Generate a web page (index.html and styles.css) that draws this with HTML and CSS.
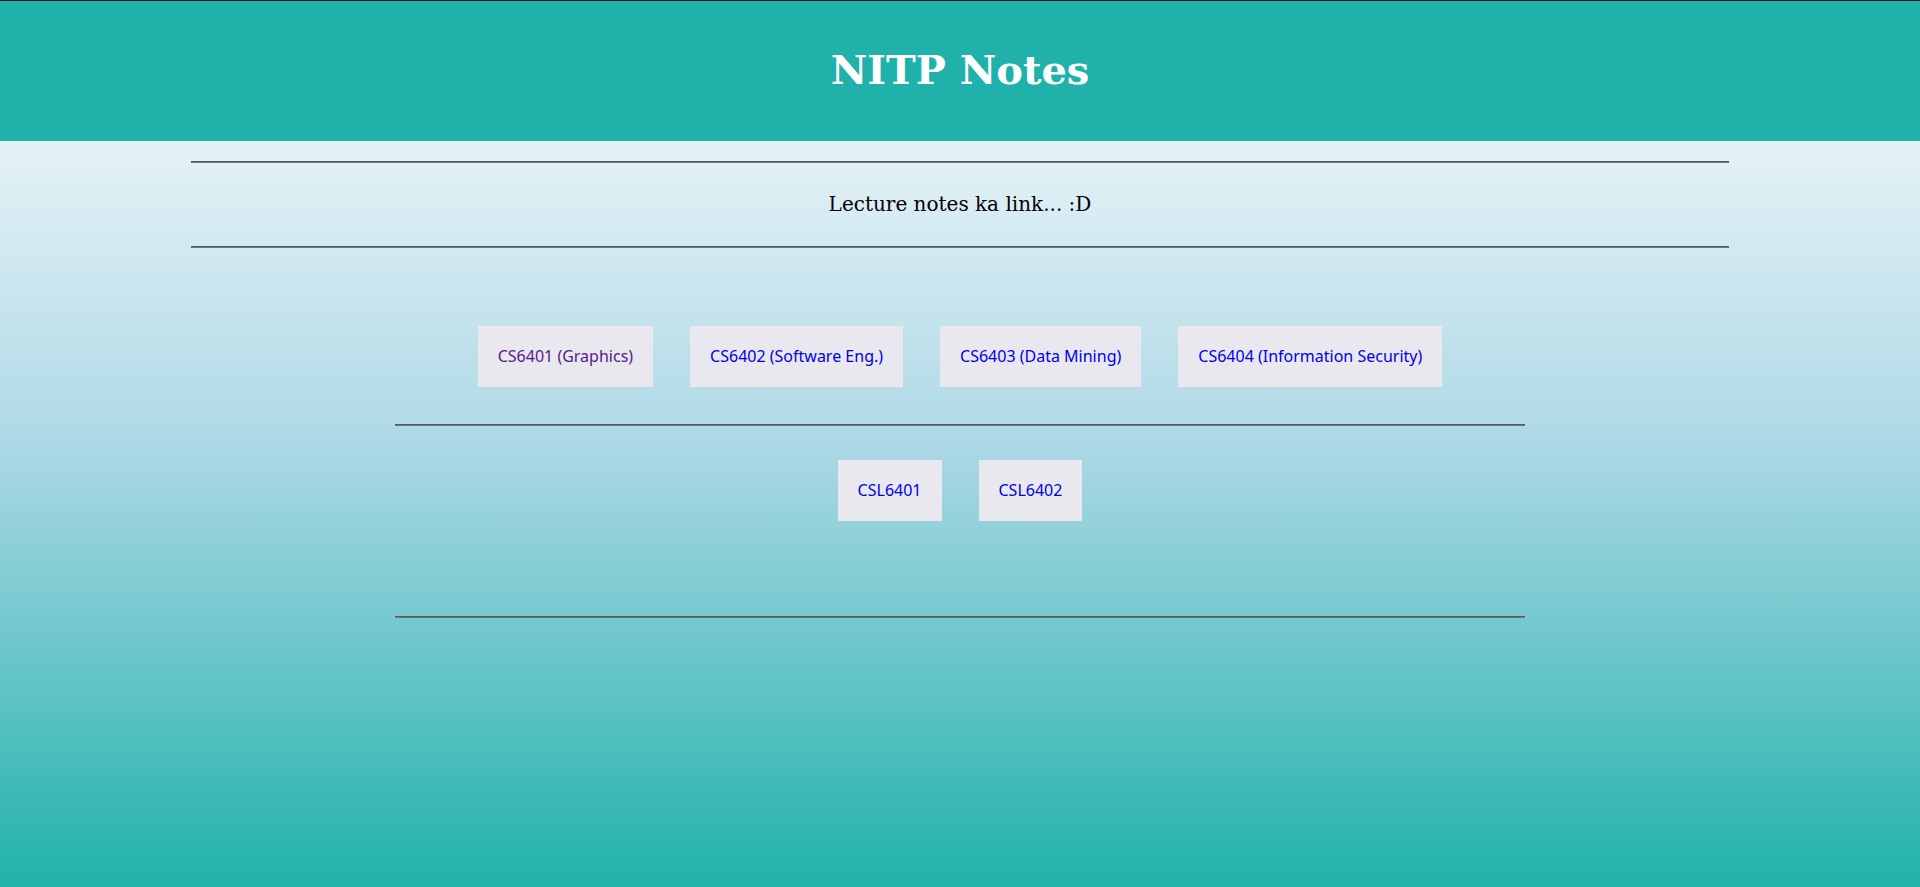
FILE: index.html
```html
<!DOCTYPE html>
<html lang="en">
<head>
<meta charset="utf-8">
<title>NITP Notes</title>
<link rel="stylesheet" href="styles.css">
</head>
<body>
<header class="top">
  <h1 class="title">NITP Notes</h1>
</header>
<hr class="rule wide first">
<p class="tagline">Lecture notes ka link... :D</p>
<hr class="rule wide">
<nav class="row row-one">
  <a class="btn visited" href="#">CS6401 (Graphics)</a>
  <a class="btn" href="#">CS6402 (Software Eng.)</a>
  <a class="btn" href="#">CS6403 (Data Mining)</a>
  <a class="btn" href="#">CS6404 (Information Security)</a>
</nav>
<hr class="rule narrow mid">
<nav class="row row-two">
  <a class="btn" href="#">CSL6401</a>
  <a class="btn" href="#">CSL6402</a>
</nav>
<hr class="rule narrow last">
</body>
</html>
```

FILE: styles.css
```css
html {
  margin: 0;
  padding: 0;
}
body {
  margin: 0;
  min-height: 887px;
  background: linear-gradient(to bottom, #ffffff 0%, #add8e6 50%, #20b2aa 100%);
  font-family: "DejaVu Serif", serif;
  color: #000;
}
.top {
  background: #20b2aa;
  border-top: 1px solid #141a2a;
  height: 140px;
  display: flex;
  align-items: center;
  justify-content: center;
}
.title {
  margin: 0;
  color: #ffffff;
  font-family: "DejaVu Serif", serif;
  font-weight: bold;
  font-size: 40px;
  line-height: 1;
  padding-bottom: 2px;
}
.rule {
  border: 0;
  height: 0;
  border-top: 1px solid #555a5c;
  border-bottom: 1px solid #6f7678;
  margin: 0 auto;
  padding: 0;
}
.wide {
  width: 1538px;
}
.narrow {
  width: 1130px;
}
.first {
  margin-top: 20px;
}
.tagline {
  margin: 0;
  padding: 29px 0 30px;
  text-align: center;
  font-family: "DejaVu Serif", serif;
  font-size: 20px;
  line-height: 24px;
}
.row {
  display: flex;
  justify-content: center;
  gap: 37px;
}
.row-one {
  margin-top: 78px;
}
.row-two {
  margin-top: 34px;
}
.mid {
  margin-top: 37px;
}
.last {
  margin-top: 95px;
}
.btn {
  display: block;
  background: #e9e8ee;
  padding: 20px;
  font-family: "Noto Sans", sans-serif;
  font-size: 16px;
  line-height: 21px;
  color: #0000ee;
  text-decoration: none;
}
.btn.visited {
  color: #551a8b;
}
```
